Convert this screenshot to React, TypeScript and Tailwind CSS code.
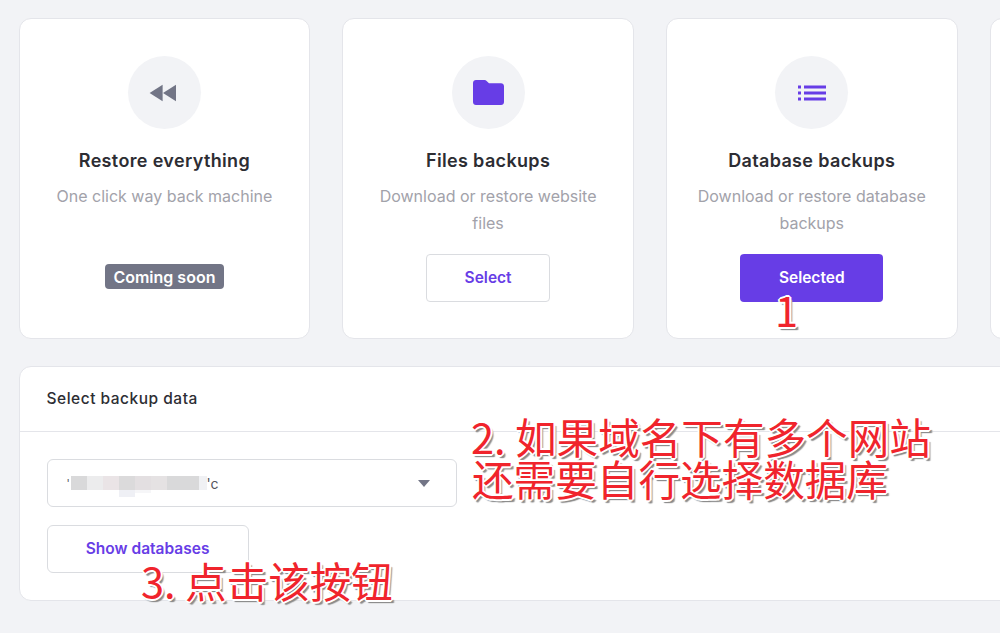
import type { ReactNode } from "react";

const noteText =
  "absolute font-['Noto_Sans_CJK_SC',sans-serif] text-[41.6px] leading-[42px] text-[#f0242c] whitespace-nowrap [text-shadow:-1px_-1px_0_#fff,1px_-1px_0_#fff,-1px_1px_0_#fff,1px_1px_0_#fff,0_-2px_0_#fff,-2px_0_0_#fff,2px_0_0_#fff,0_2px_0_#fff,2px_3px_1px_#8a8a8a,3px_3px_1px_#a5a5a5]";

function RewindIcon() {
  return (
    <svg className="-ml-[2px]" width="28" height="18" viewBox="0 0 28 18" fill="#727586">
      <path d="M0.6 9 L13.6 0.8 V17.2 Z" />
      <path d="M14 9 L27 0.8 V17.2 Z" />
    </svg>
  );
}

function FolderIcon() {
  return (
    <svg width="31" height="25" viewBox="0 0 31 25" fill="#673de6">
      <path d="M3 0 H11.5 C12.4 0 13 .4 13.6 1 L16 3.2 H28 C29.7 3.2 31 4.5 31 6.2 V22 C31 23.7 29.7 25 28 25 H3 C1.3 25 0 23.7 0 22 V3 C0 1.3 1.3 0 3 0 Z" />
    </svg>
  );
}

function ListIcon() {
  return (
    <svg width="28" height="16" viewBox="0 0 28 16" fill="#673de6">
      <rect x="0" y="0.5" width="3" height="3" />
      <rect x="0" y="6.5" width="3" height="3" />
      <rect x="0" y="12.5" width="3" height="3" />
      <rect x="6" y="0.5" width="22" height="3" />
      <rect x="6" y="6.5" width="22" height="3" />
      <rect x="6" y="12.5" width="22" height="3" />
    </svg>
  );
}

function BackupCard({
  icon,
  title,
  desc,
  children,
}: {
  icon?: ReactNode;
  title?: string;
  desc?: string;
  children?: ReactNode;
}) {
  return (
    <div className="w-[291.67px] h-[321px] shrink-0 flex flex-col items-center bg-white border border-[#e4e5ea] rounded-xl pt-[37px] px-5">
      {icon && (
        <div className="w-[73px] h-[73px] rounded-full bg-[#f2f3f6] flex items-center justify-center">
          {icon}
        </div>
      )}
      <h3 className="mt-[19px] h-[26px] text-[18px] leading-[26px] font-semibold tracking-[0.35px] text-[#2d2d33]">{title}</h3>
      <p className="mt-[9px] h-[53px] text-center text-[16px] leading-[27px] text-[#a2a2aa]">{desc}</p>
      <div className="mt-[18px] h-12 flex items-start justify-center">{children}</div>
    </div>
  );
}

export default function App() {
  return (
    <div className="relative w-[1000px] h-[633px] overflow-hidden bg-[#f2f3f6] font-['Inter',sans-serif]">
      <div className="pl-[18.6px] pt-[18px]">
        <div className="flex gap-8">
          <BackupCard icon={<RewindIcon />} title="Restore everything" desc="One click way back machine">
            <span className="mt-[10px] h-[25px] w-[119px] flex items-center justify-center rounded bg-[#727586] text-white text-[16px] font-semibold">
              Coming soon
            </span>
          </BackupCard>
          <BackupCard icon={<FolderIcon />} title="Files backups" desc="Download or restore website files">
            <button className="w-[124px] h-12 bg-white border border-[#dadce0] rounded text-[#673de6] text-[15.5px] font-semibold">
              Select
            </button>
          </BackupCard>
          <BackupCard icon={<ListIcon />} title="Database backups" desc="Download or restore database backups">
            <button className="w-[143px] h-12 bg-[#673de6] rounded text-white text-[15.5px] font-semibold">
              Selected
            </button>
          </BackupCard>
          <BackupCard />
        </div>

        <div className="mt-[27px] w-[1100px] h-[235px] bg-white border border-[#e4e5ea] rounded-xl">
          <div className="h-[65px] pl-[27px] flex items-center border-b border-[#e4e5ea]">
            <span className="text-[15.5px] font-medium tracking-[0.5px] text-[#2d2d33]">Select backup data</span>
          </div>
          <div className="pl-[27px] pt-[27px]">
            <div className="w-[410px] h-12 flex items-center justify-between bg-white border border-[#dadce0] rounded-md pl-[19px] pr-[26px]">
              <div className="flex items-center text-[14px] text-[#55555c]">
                <span className="w-[4px] text-[11px]">'</span>
                <div className="relative flex h-[14px]">
                  <span className="w-4 bg-[#d9d9da]" />
                  <span className="w-4 bg-[#ececed]" />
                  <span className="w-4 bg-[#eae4e6]" />
                  <span className="w-4 bg-[#dbdadb]" />
                  <span className="w-4 bg-[#e3dfe1]" />
                  <span className="w-4 bg-[#e5e2e3]" />
                  <span className="w-8 bg-[#d9d9da]" />
                  <span className="w-2 bg-[#f0f1f4]" />
                  <span className="absolute left-[48px] top-[14px] w-4 h-[7px] bg-[#eff0f5]" />
                  <span className="absolute left-[64px] top-[14px] w-4 h-[3px] bg-[#f6f6f8]" />
                </div>
                <span>'c</span>
              </div>
              <svg width="12" height="7" viewBox="0 0 12 7" fill="#727586">
                <path d="M0 0 H12 L6 7 Z" />
              </svg>
            </div>
            <button className="mt-[18px] w-[202px] h-12 bg-white border border-[#dadce0] rounded-md text-[#673de6] text-[15.5px] font-semibold">
              Show databases
            </button>
          </div>
        </div>
      </div>

      {/* red notes pasted on top of the screenshot */}
      <span className={`${noteText} left-[775px] top-[288px]`}>1</span>
      <span className={`${noteText} left-[471px] top-[415px]`}>2. 如果域名下有多个网站</span>
      <span className={`${noteText} left-[472px] top-[457px]`}>还需要自行选择数据库</span>
      <span className={`${noteText} left-[141px] top-[559px]`}>3. 点击该按钮</span>
    </div>
  );
}
